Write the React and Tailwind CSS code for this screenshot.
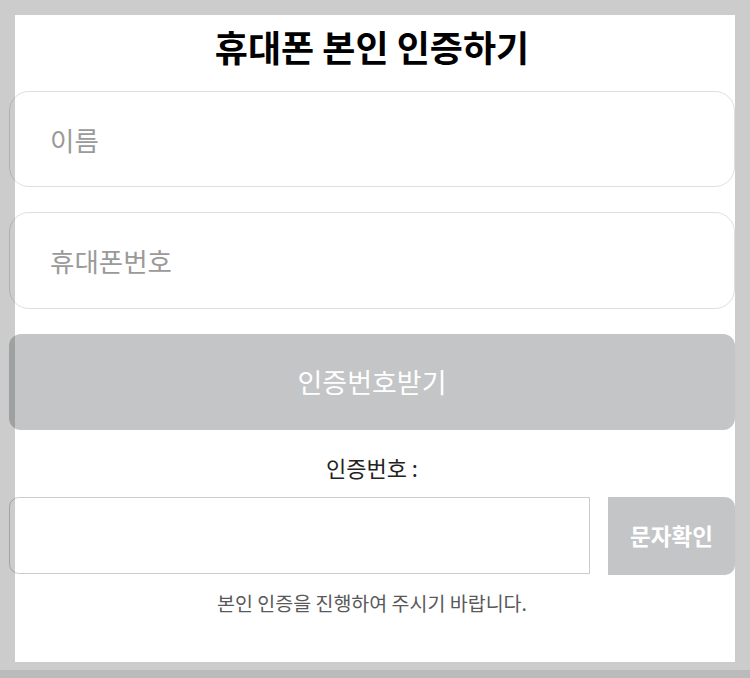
export default function App() {
    const font = { fontFamily: '"Noto Sans CJK KR", "Noto Sans", sans-serif' };

    return (
        <div className="w-[750px] h-[678px] bg-[#cccccc] overflow-hidden flex flex-col" style={font}>
            <div className="mt-[15px] mx-[15px] h-[647px] bg-white">
                {/* Content sits 6px left of the white panel */}
                <div className="-ml-[6px] w-[726px] flex flex-col">
                    <h1 className="pt-[7px] text-center text-[36px] leading-[48px] font-bold text-black">
                        휴대폰 본인 인증하기
                    </h1>

                    <input
                        type="text"
                        placeholder="이름"
                        className="mt-[21px] h-[96px] w-full rounded-[20px] border border-black/[0.13] bg-transparent pl-[40px] text-[26.5px] text-[#333] placeholder:text-[#9a9a9a] outline-none"
                    />
                    <input
                        type="text"
                        placeholder="휴대폰번호"
                        className="mt-[25px] h-[97px] w-full rounded-[20px] border border-black/[0.13] bg-transparent pl-[40px] text-[26.5px] text-[#333] placeholder:text-[#9a9a9a] outline-none"
                    />

                    <button className="mt-[25px] h-[96px] w-full rounded-[12px] bg-[rgba(40,43,51,0.274)] text-[27px] text-white">
                        인증번호받기
                    </button>

                    <p className="mt-[23px] text-center text-[22px] leading-[28px] text-[#222]">인증번호 :</p>

                    <div className="mt-[16px] flex h-[78px] gap-[18px]">
                        <input
                            type="text"
                            className="h-[77px] w-[581px] rounded-l-[10px] border border-black/20 bg-transparent px-3 text-[20px] outline-none"
                        />
                        <button className="h-[78px] flex-1 rounded-r-[10px] bg-[rgba(40,43,51,0.274)] text-[22.5px] font-bold text-white">
                            문자확인
                        </button>
                    </div>

                    <p className="mt-[15px] text-center text-[19.5px] leading-[26px] text-[#595959]">
                        본인 인증을 진행하여 주시기 바랍니다.
                    </p>
                </div>
            </div>
            <div className="mt-[8px] h-[8px] bg-[#bbbbbb]"></div>
        </div>
    );
}
